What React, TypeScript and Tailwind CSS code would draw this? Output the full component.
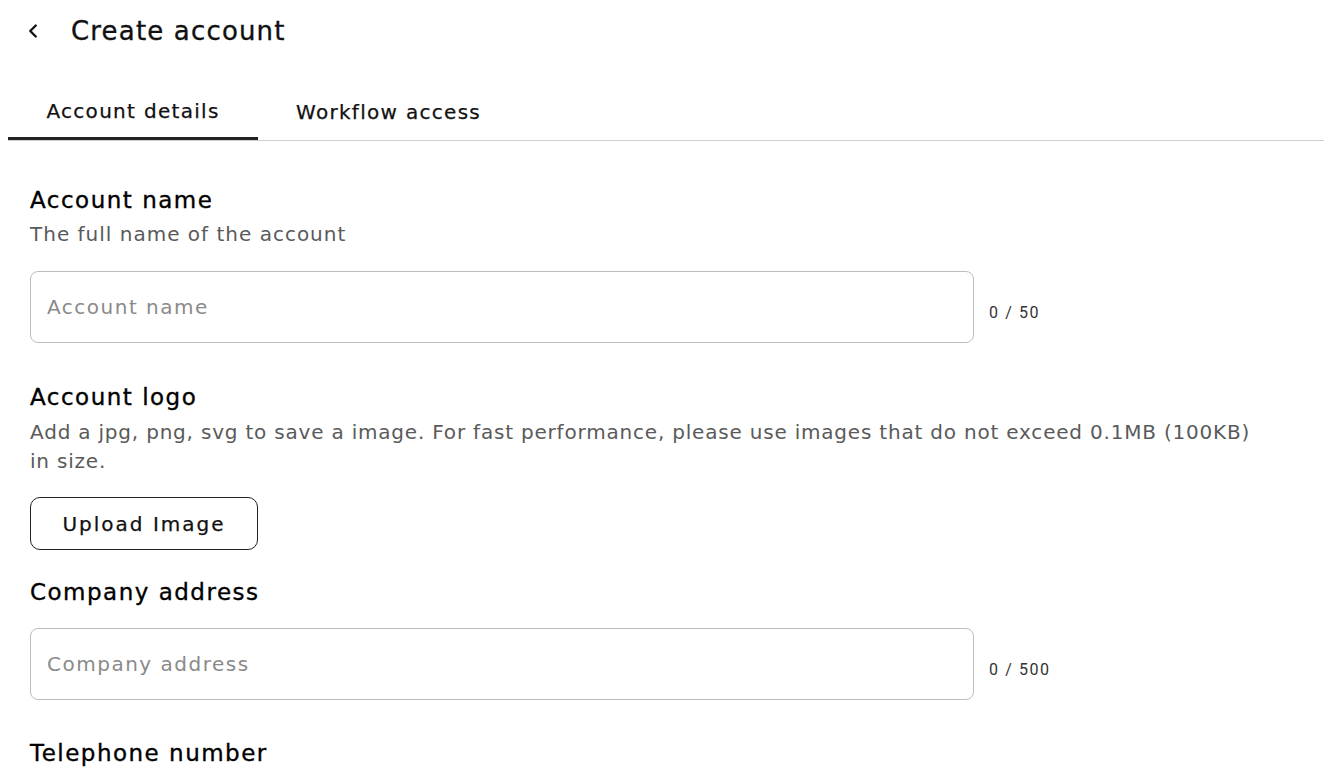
import { ChevronLeft } from 'lucide-react';

const font = { fontFamily: '"DejaVu Sans", "Noto Sans", sans-serif' };

function Counter({ text }: { text: string }) {
  return (
    <span className="ml-[15px] mt-[12px] text-[16px] tracking-[0.1em] text-[#333] font-['Roboto',sans-serif]">
      {text}
    </span>
  );
}

function TextField({ placeholder, max }: { placeholder: string; max: number }) {
  return (
    <div className="flex items-center">
      <input
        type="text"
        placeholder={placeholder}
        className="w-[944px] h-[72px] px-4 rounded-lg border border-[#bdbdbd] text-[20px] tracking-[0.075em] text-[#222] placeholder:text-[#8a8a8a] outline-none"
      />
      <Counter text={`0 / ${max}`} />
    </div>
  );
}

const label = 'text-[23px] tracking-[0.065em] leading-[30px] text-black [-webkit-text-stroke:0.35px_#000]';

export default function App() {
  return (
    <div className="min-h-screen bg-white text-[#111]" style={font}>
      {/* Header */}
      <div className="flex items-center h-[62px] pl-[22px]">
        <button className="w-[22px] h-[22px] flex items-center justify-center">
          <ChevronLeft size={22} strokeWidth={2.6} />
        </button>
        <h1 className="ml-[27px] text-[26px] tracking-[0.045em] [-webkit-text-stroke:0.35px_#111]">Create account</h1>
      </div>

      {/* Tabs */}
      <div className="mt-[20px] ml-[8px] flex border-b border-[#cfcfcf]">
        <button className="w-[250px] h-[58px] pt-[2px] text-[20px] tracking-[0.065em] border-b-[3px] border-[#222] -mb-px [-webkit-text-stroke:0.25px_#111]">
          Account details
        </button>
        <button className="px-[38px] h-[58px] pt-[2px] text-[20px] tracking-[0.065em] [-webkit-text-stroke:0.25px_#111]">
          Workflow access
        </button>
      </div>

      {/* Form */}
      <div className="pl-[30px] pr-[40px] pt-[44px]">
        <section>
          <h2 className={label}>Account name</h2>
          <p className="text-[20px] tracking-[0.05em] text-[#5a5a5a] leading-[29px] mt-[5px]">The full name of the account</p>
          <div className="mt-[22px]">
            <TextField placeholder="Account name" max={50} />
          </div>
        </section>

        <section className="mt-[39px]">
          <h2 className={label}>Account logo</h2>
          <p className="text-[20px] tracking-[0.04em] text-[#5a5a5a] leading-[29px] mt-[6px] max-w-[1240px]">
            Add a jpg, png, svg to save a image. For fast performance, please use images that do not exceed 0.1MB (100KB) in size.
          </p>
          <button className="mt-[21px] w-[228px] h-[53px] rounded-[10px] border border-[#222] text-[20px] tracking-[0.1em] [-webkit-text-stroke:0.25px_#111]">
            Upload Image
          </button>
        </section>

        <section className="mt-[27px]">
          <h2 className={label}>Company address</h2>
          <div className="mt-[21px]">
            <TextField placeholder="Company address" max={500} />
          </div>
        </section>

        <section className="mt-[38px]">
          <h2 className={label}>Telephone number</h2>
        </section>
      </div>
    </div>
  );
}
